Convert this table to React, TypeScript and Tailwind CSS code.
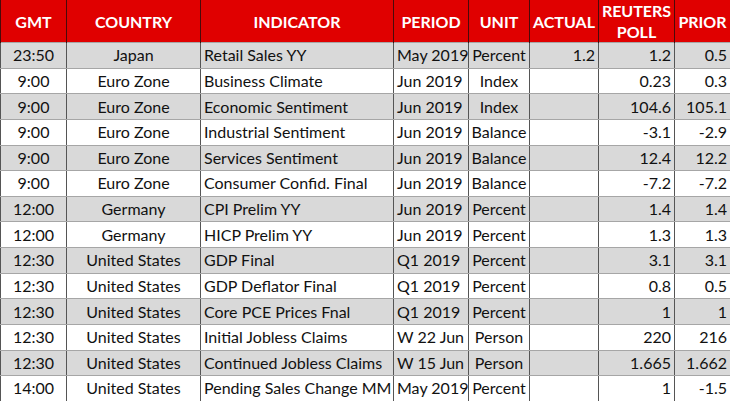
const rows = [
  ['23:50', 'Japan', 'Retail Sales YY', 'May 2019', 'Percent', '1.2', '1.2', '0.5'],
  ['9:00', 'Euro Zone', 'Business Climate', 'Jun 2019', 'Index', '', '0.23', '0.3'],
  ['9:00', 'Euro Zone', 'Economic Sentiment', 'Jun 2019', 'Index', '', '104.6', '105.1'],
  ['9:00', 'Euro Zone', 'Industrial Sentiment', 'Jun 2019', 'Balance', '', '-3.1', '-2.9'],
  ['9:00', 'Euro Zone', 'Services Sentiment', 'Jun 2019', 'Balance', '', '12.4', '12.2'],
  ['9:00', 'Euro Zone', 'Consumer Confid. Final', 'Jun 2019', 'Balance', '', '-7.2', '-7.2'],
  ['12:00', 'Germany', 'CPI Prelim YY', 'Jun 2019', 'Percent', '', '1.4', '1.4'],
  ['12:00', 'Germany', 'HICP Prelim YY', 'Jun 2019', 'Percent', '', '1.3', '1.3'],
  ['12:30', 'United States', 'GDP Final', 'Q1 2019', 'Percent', '', '3.1', '3.1'],
  ['12:30', 'United States', 'GDP Deflator Final', 'Q1 2019', 'Percent', '', '0.8', '0.5'],
  ['12:30', 'United States', 'Core PCE Prices Fnal', 'Q1 2019', 'Percent', '', '1', '1'],
  ['12:30', 'United States', 'Initial Jobless Claims', 'W 22 Jun', 'Person', '', '220', '216'],
  ['12:30', 'United States', 'Continued Jobless Claims', 'W 15 Jun', 'Person', '', '1.665', '1.662'],
  ['14:00', 'United States', 'Pending Sales Change MM', 'May 2019', 'Percent', '', '1', '-1.5'],
];

const widths = ['w-[66px]', 'w-[134px]', 'w-[193px]', 'w-[75px]', 'w-[61px]', 'w-[69px]', 'w-[76px]', 'w-[56px]'];
const align = ['text-center', 'text-center', 'text-left pl-[3px]', 'text-left pl-[3px]', 'text-center', 'text-right pr-[3px]', 'text-right pr-[3px]', 'text-right pr-[3px]'];

export default function App() {
  return (
    <div className="w-[730px] h-[401px] bg-white overflow-hidden font-['Lato','Liberation_Sans',sans-serif] text-[#111]">
      <table className="border-collapse table-fixed w-[730px]">
        <colgroup>
          {widths.map((w, i) => (
            <col key={i} className={w} />
          ))}
        </colgroup>
        <thead>
          <tr className="h-[42px] bg-[#e00000] text-white text-[16px] leading-[21px]">
            {['GMT', 'COUNTRY', 'INDICATOR', 'PERIOD', 'UNIT', 'ACTUAL', 'REUTERS POLL', 'PRIOR'].map((h) => (
              <th key={h} className="border-x border-x-[#4a0a0a] text-center font-bold p-0">
                {h}
              </th>
            ))}
          </tr>
        </thead>
        <tbody className="text-[16px] leading-none">
          {rows.map((r, i) => (
            <tr key={i} className={`h-[25.64px] ${i % 2 === 0 ? 'bg-[#d9d9d9]' : 'bg-white'}`}>
              {r.map((c, j) => (
                <td
                  key={j}
                  className={`border-x border-x-[#555] border-y border-y-[#a6a6a6] p-0 whitespace-nowrap ${align[j]}`}
                >
                  {c}
                </td>
              ))}
            </tr>
          ))}
        </tbody>
      </table>
    </div>
  );
}
